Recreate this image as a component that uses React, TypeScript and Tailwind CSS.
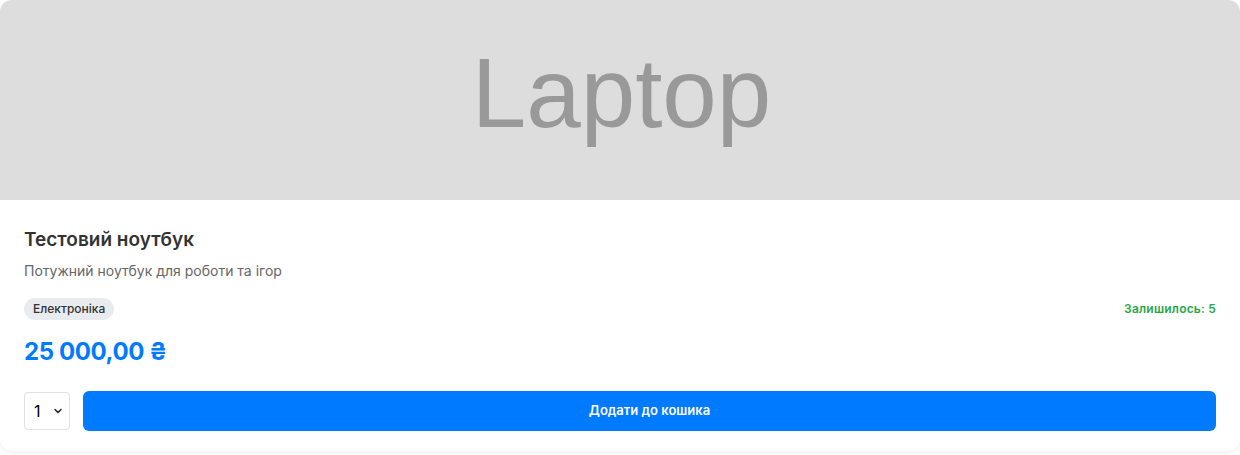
import React from "react";

export default function App() {
  return (
    <div className="w-[1240px] h-[455px] bg-white" style={{ fontFamily: "Inter, 'Noto Sans', sans-serif" }}>
      <div className="w-[1240px] h-[451px] bg-white rounded-xl overflow-hidden shadow-[0_1px_4px_rgba(0,0,0,0.08)] flex flex-col">
        <div className="h-[200px] bg-[#dddddd] flex items-center justify-center">
          <span
            className="text-[98px] leading-none text-[#999999] mb-[14px] ml-[3px]"
            style={{ fontFamily: "'Liberation Sans', Arial, sans-serif" }}
          >
            Laptop
          </span>
        </div>
        <div className="flex flex-col px-6 pt-[26px] pb-5">
          <h3 className="text-[19px] leading-[28px] font-semibold text-[#333333]">Тестовий ноутбук</h3>
          <p className="mt-[7px] text-[14px] leading-[20px] text-[#666666]">Потужний ноутбук для роботи та ігор</p>
          <div className="mt-[17px] flex items-center justify-between">
            <span className="h-[22px] px-[9px] rounded-full bg-[#e9ecef] text-[12px] font-medium text-[#333333] flex items-center">
              Електроніка
            </span>
            <span className="text-[12px] font-semibold text-[#28a745] tracking-[0.2px]">Залишилось: 5</span>
          </div>
          <div className="mt-[16px] text-[24px] leading-[32px] font-bold text-[#007bff] tracking-[-0.4px]">25 000,00 ₴</div>
          <div className="mt-[23px] flex items-center gap-[13px]">
            <div className="w-[46px] h-[38px] border border-[#dee2e6] rounded-[4px] flex items-center pl-[9px] pr-[5px] justify-between bg-white">
              <span className="text-[16px] text-black">1</span>
              <svg width="12" height="12" viewBox="0 0 12 12" fill="none">
                <path d="M3 4.5 L6 7.5 L9 4.5" stroke="#222" strokeWidth="1.5" strokeLinecap="round" strokeLinejoin="round" />
              </svg>
            </div>
            <button className="flex-1 h-[40px] rounded-[6px] bg-[#007bff] text-white text-[13px] font-semibold flex items-center justify-center">
              Додати до кошика
            </button>
          </div>
        </div>
      </div>
    </div>
  );
}
